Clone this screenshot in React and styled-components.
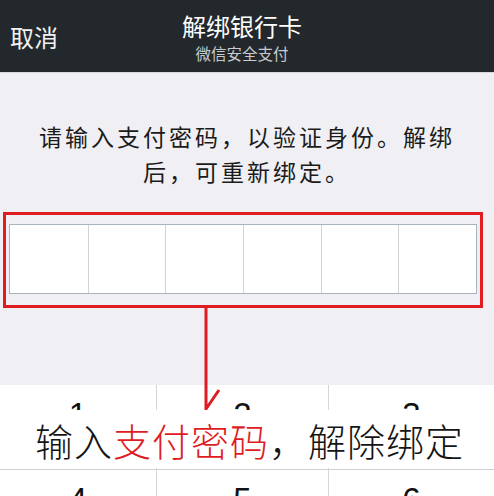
import React from 'react';
import styled, { createGlobalStyle } from 'styled-components';

const GlobalStyle = createGlobalStyle`
    html, body {
        margin: 0;
        padding: 0;
        background: #efeff4;
    }
    * {
        box-sizing: border-box;
    }
`

const CJK = `"Noto Sans CJK SC", "Noto Sans", sans-serif`
const RED = '#e01c23'

const Screen = styled.div`
    position: relative;
    width: 494px;
    height: 496px;
    overflow: hidden;
    background-color: #efeff4;
    font-family: ${CJK};
    display: flex;
    flex-direction: column;
`

const NavBar = styled.div`
    height: 73px;
    flex-shrink: 0;
    background-color: #23282c;
    border-bottom: 1px solid #d9d9dd;
    display: grid;
    grid-template-columns: 1fr auto 1fr;
    align-items: center;
    padding: 0 10px;
`

const Cancel = styled.div`
    color: #f2f2f2;
    font-size: 24px;
    line-height: 1;
    margin-top: 2px;
`

const TitleBlock = styled.div`
    display: flex;
    flex-direction: column;
    align-items: center;
    margin-left: -10px;
`

const Title = styled.div`
    color: #ffffff;
    font-size: 24px;
    line-height: 28px;
    margin-top: 2px;
`

const Subtitle = styled.div`
    color: #c9cbcc;
    font-size: 15.5px;
    line-height: 18px;
    margin-top: 4px;
`

const Prompt = styled.p`
    margin: 46px auto 0;
    width: 440px;
    text-align: center;
    color: #1b1b1b;
    font-size: 23px;
    letter-spacing: 3px;
    line-height: 35px;
`

const Frame = styled.div`
    margin: 23px 0 0 3px;
    width: 480px;
    border: 3px solid ${RED};
    padding: 9px 3px 11px;
`

const PinBox = styled.div`
    display: grid;
    grid-template-columns: repeat(6, 1fr);
    height: 70px;
    background: #ffffff;
    border: 1px solid #a9b4bf;
`

const PinCell = styled.div`
    border-left: ${props => (props.first ? 'none' : '1px solid #d2d3d6')};
`

const Keypad = styled.div`
    margin-top: 77px;
    flex: 1;
    background-color: #ffffff;
    display: grid;
    grid-template-columns: 156px 172px 1fr;
    grid-auto-rows: 85px;
`

const Key = styled.div`
    display: flex;
    justify-content: center;
    padding-top: 10px;
    border-left: ${props => (props.first ? 'none' : '1px solid #d6d6d9')};
    border-bottom: 1px solid #cfcfd3;
`

const Digit = styled.div`
    font-family: "Liberation Sans", Arial, sans-serif;
    font-size: 33px;
    line-height: 40px;
    color: #111111;
`

const Pointer = styled.svg`
    position: absolute;
    left: 0;
    top: 0;
    pointer-events: none;
`

const Caption = styled.div`
    position: absolute;
    left: 20px;
    top: 410px;
    width: 453px;
    height: 58px;
    background: #ffffff;
    padding-left: 15px;
    display: flex;
    align-items: center;
    font-family: ${CJK};
    font-weight: 300;
    font-size: 38px;
    letter-spacing: 1px;
    color: #141414;
`

const Hot = styled.span`
    color: ${RED};
`

const digits = ['1', '2', '3', '4', '5', '6']

export default function App() {
    return (
        <Screen>
            <GlobalStyle />
            <NavBar>
                <Cancel>取消</Cancel>
                <TitleBlock>
                    <Title>解绑银行卡</Title>
                    <Subtitle>微信安全支付</Subtitle>
                </TitleBlock>
                <div />
            </NavBar>

            <Prompt>请输入支付密码，以验证身份。解绑后，可重新绑定。</Prompt>

            <Frame>
                <PinBox>
                    {[0, 1, 2, 3, 4, 5].map(i => <PinCell key={i} first={i === 0} />)}
                </PinBox>
            </Frame>

            <Keypad>
                {digits.map((d, i) => (
                    <Key key={d} first={i % 3 === 0}>
                        <Digit>{d}</Digit>
                    </Key>
                ))}
            </Keypad>

            <Pointer width="494" height="496">
                <path d="M206 306 L206 409 L219 390" fill="none" stroke={RED} strokeWidth="3" />
            </Pointer>

            <Caption>
                输入<Hot>支付密码</Hot>，解除绑定
            </Caption>
        </Screen>
    );
}
